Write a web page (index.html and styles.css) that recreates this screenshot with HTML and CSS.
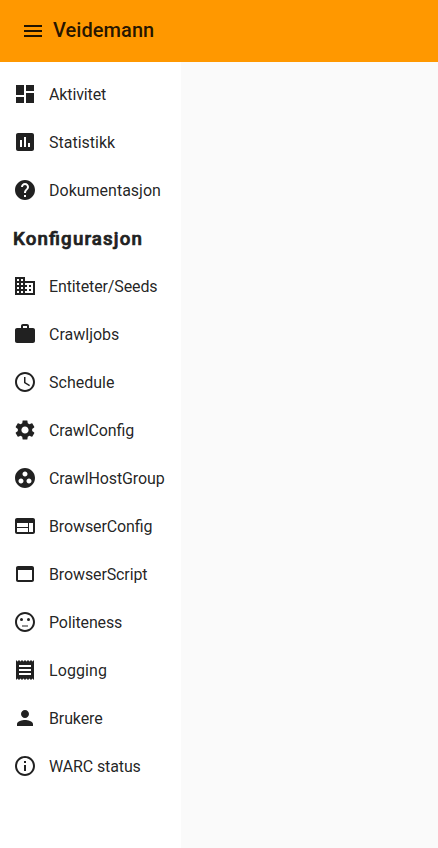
FILE: index.html
```html
<!DOCTYPE html>
<html lang="no">
<head>
<meta charset="utf-8">
<title>Veidemann</title>
<link rel="stylesheet" href="styles.css">
</head>
<body>
<header class="toolbar">
  <svg class="icon menu" viewBox="0 0 24 24"><path d="M3 18h18v-2H3v2zm0-5h18v-2H3v2zm0-7v2h18V6H3z"/></svg>
  <h1 class="brand">Veidemann</h1>
</header>
<div class="container">
  <nav class="sidenav">
    <a class="item tight"><svg class="icon" viewBox="0 0 24 24"><path d="M3 13h8V3H3v10zm0 8h8v-6H3v6zm10 0h8V11h-8v10zm0-18v6h8V3h-8z"/></svg><span>Aktivitet</span></a>
    <a class="item"><svg class="icon" viewBox="0 0 24 24"><path d="M19 3H5c-1.100 0-2 .9-2 2v14c0 1.100.9 2 2 2h14c1.100 0 2-.9 2-2V5c0-1.100-.9-2-2-2zM9 17H7v-7h2v7zm4 0h-2V7h2v10zm4 0h-2v-4h2v4z"/></svg><span>Statistikk</span></a>
    <a class="item"><svg class="icon" viewBox="0 0 24 24"><path d="M12 2C6.480 2 2 6.480 2 12s4.480 10 10 10 10-4.480 10-10S17.520 2 12 2zm1 17h-2v-2h2v2zm2.070-7.750l-.9.920C13.450 12.900 13 13.500 13 15h-2v-.5c0-1.100.450-2.100 1.170-2.830l1.240-1.260c.370-.360.590-.860.590-1.410 0-1.100-.9-2-2-2s-2 .9-2 2H8c0-2.210 1.790-4 4-4s4 1.790 4 4c0 .880-.360 1.680-.930 2.250z"/></svg><span>Dokumentasjon</span></a>
    <h2 class="subheader">Konfigurasjon</h2>
    <a class="item tight"><svg class="icon" viewBox="0 0 24 24"><path d="M12 7V3H2v18h20V7H12zM6 19H4v-2h2v2zm0-4H4v-2h2v2zm0-4H4V9h2v2zm0-4H4V5h2v2zm4 12H8v-2h2v2zm0-4H8v-2h2v2zm0-4H8V9h2v2zm0-4H8V5h2v2zm10 12h-8v-2h2v-2h-2v-2h2v-2h-2V9h8v10zm-2-8h-2v2h2v-2zm0 4h-2v2h2v-2z"/></svg><span>Entiteter/Seeds</span></a>
    <a class="item"><svg class="icon" viewBox="0 0 24 24"><path d="M20 6h-4V4c0-1.110-.890-2-2-2h-4c-1.110 0-2 .890-2 2v2H4c-1.110 0-1.990.890-1.990 2L2 19c0 1.110.890 2 2 2h16c1.110 0 2-.890 2-2V8c0-1.110-.890-2-2-2zm-6 0h-4V4h4v2z"/></svg><span>Crawljobs</span></a>
    <a class="item"><svg class="icon" viewBox="0 0 24 24"><path d="M11.990 2C6.470 2 2 6.480 2 12s4.470 10 9.990 10C17.520 22 22 17.520 22 12S17.520 2 11.990 2zM12 20c-4.420 0-8-3.580-8-8s3.580-8 8-8 8 3.580 8 8-3.580 8-8 8zm.5-13H11v6l5.250 3.150.750-1.230-4.500-2.670z"/></svg><span>Schedule</span></a>
    <a class="item tight"><svg class="icon" viewBox="0 0 24 24"><path d="M19.140 12.940c.040-.300.060-.610.060-.940s-.020-.640-.070-.940l2.030-1.580c.180-.140.230-.410.120-.610l-1.920-3.320c-.120-.220-.370-.290-.590-.220l-2.390.960c-.5-.380-1.030-.7-1.620-.940l-.360-2.540c-.040-.240-.240-.410-.480-.410h-3.840c-.240 0-.430.170-.470.410l-.360 2.540c-.590.240-1.130.570-1.620.940l-2.390-.960c-.220-.080-.470 0-.590.220L2.740 8.870c-.120.210-.080.470.120.610l2.030 1.580c-.050.300-.090.630-.090.940s.020.640.070.940l-2.030 1.580c-.180.140-.230.410-.120.610l1.920 3.320c.120.220.370.290.590.220l2.390-.960c.5.380 1.030.7 1.620.940l.360 2.540c.050.240.240.410.480.410h3.840c.240 0 .440-.170.470-.410l.360-2.540c.590-.240 1.130-.560 1.620-.940l2.390.960c.220.080.470 0 .590-.220l1.920-3.320c.120-.220.070-.470-.120-.610l-2.010-1.580zM12 15.600c-1.980 0-3.600-1.620-3.600-3.600s1.620-3.600 3.600-3.600 3.600 1.620 3.600 3.600-1.620 3.600-3.600 3.600z"/></svg><span>CrawlConfig</span></a>
    <a class="item tight"><svg class="icon" viewBox="0 0 24 24"><path d="M12 2C6.480 2 2 6.480 2 12s4.480 10 10 10 10-4.480 10-10S17.520 2 12 2zM8 17.500c-1.380 0-2.500-1.120-2.500-2.500s1.120-2.500 2.500-2.500 2.500 1.120 2.500 2.500-1.120 2.500-2.500 2.500zM9.500 8c0-1.380 1.120-2.500 2.500-2.500s2.500 1.120 2.500 2.500-1.120 2.500-2.500 2.500S9.500 9.380 9.500 8zm6.500 9.500c-1.380 0-2.500-1.120-2.500-2.500s1.120-2.500 2.500-2.500 2.500 1.120 2.500 2.500-1.120 2.500-2.500 2.500z"/></svg><span>CrawlHostGroup</span></a>
    <a class="item tight"><svg class="icon" viewBox="0 0 24 24"><path d="M20 4H4c-1.100 0-1.990.9-1.990 2L2 18c0 1.100.9 2 2 2h16c1.100 0 2-.9 2-2V6c0-1.100-.9-2-2-2zm-5 14H4v-4h11v4zm0-5H4V9h11v4zm5 5h-4V9h4v9z"/></svg><span>BrowserConfig</span></a>
    <a class="item tight"><svg class="icon" viewBox="0 0 24 24"><path d="M19 4H5c-1.110 0-2 .9-2 2v12c0 1.100.890 2 2 2h14c1.100 0 2-.9 2-2V6c0-1.100-.890-2-2-2zm0 14H5V8h14v10z"/></svg><span>BrowserScript</span></a>
    <a class="item tight"><svg class="icon" viewBox="0 0 24 24"><path d="M9 15.500h6v1H9z"/><circle cx="15.500" cy="9.500" r="1.500"/><circle cx="8.500" cy="9.500" r="1.500"/><path d="M11.990 2C6.470 2 2 6.480 2 12s4.470 10 9.990 10C17.520 22 22 17.520 22 12S17.520 2 11.990 2zM12 20c-4.420 0-8-3.580-8-8s3.580-8 8-8 8 3.580 8 8-3.580 8-8 8z"/></svg><span>Politeness</span></a>
    <a class="item loose"><svg class="icon" viewBox="0 0 24 24"><path d="M18 17H6v-2h12v2zm0-4H6v-2h12v2zm0-4H6V7h12v2zM3 22l1.500-1.500L6 22l1.500-1.500L9 22l1.500-1.500L12 22l1.500-1.500L15 22l1.500-1.500L18 22l1.500-1.500L21 22V2l-1.500 1.500L18 2l-1.500 1.500L15 2l-1.500 1.500L12 2l-1.500 1.500L9 2 7.500 3.500 6 2 4.500 3.500 3 2v20z"/></svg><span>Logging</span></a>
    <a class="item tight"><svg class="icon" viewBox="0 0 24 24"><path d="M12 12c2.210 0 4-1.790 4-4s-1.790-4-4-4-4 1.790-4 4 1.790 4 4 4zm0 2c-2.670 0-8 1.340-8 4v2h16v-2c0-2.660-5.330-4-8-4z"/></svg><span>Brukere</span></a>
    <a class="item tight"><svg class="icon" viewBox="0 0 24 24"><path d="M11 17h2v-6h-2v6zm1-15C6.480 2 2 6.480 2 12s4.480 10 10 10 10-4.480 10-10S17.520 2 12 2zm0 18c-4.410 0-8-3.590-8-8s3.590-8 8-8 8 3.590 8 8-3.590 8-8 8zM11 9h2V7h-2v2z"/></svg><span>WARC status</span></a>
  </nav>
  <main class="content"></main>
</div>
</body>
</html>
```
FILE: styles.css
```css
* { box-sizing: border-box; }
body {
  margin: 0;
  height: 100vh;
  display: flex;
  flex-direction: column;
  overflow: hidden;
  background: #fafafa;
  color: rgba(0, 0, 0, 0.87);
  font-family: Roboto, sans-serif;
  font-feature-settings: "liga" 1;
}
.toolbar {
  flex: none;
  height: 62px;
  padding: 0 21px;
  display: flex;
  align-items: center;
  background: #ff9800;
}
.brand {
  margin: 0 0 2px 8px;
  font-size: 20px;
  line-height: 32px;
  font-weight: 500;
  letter-spacing: 0.06px;
}
.icon {
  flex: none;
  display: block;
  width: 24px;
  height: 24px;
  fill: currentColor;
}
.container { flex: 1; display: flex; }
.sidenav {
  width: 181px;
  padding-top: 8px;
  background: #fff;
}
.item {
  height: 48px;
  padding-left: 13px;
  display: flex;
  align-items: center;
  gap: 12px;
  font-size: 16px;
  white-space: nowrap;
}
.tight { letter-spacing: -0.12px; }
.loose { letter-spacing: 0.08px; }
.subheader {
  margin: 0;
  height: 48px;
  padding: 1px 0 0 13px;
  color: #212121;
  font-size: 18.720px;
  line-height: 48px;
  font-weight: 500;
  letter-spacing: 1.150px;
  -webkit-text-stroke: 0.7px currentColor;
}
.content { flex: 1; }
```
